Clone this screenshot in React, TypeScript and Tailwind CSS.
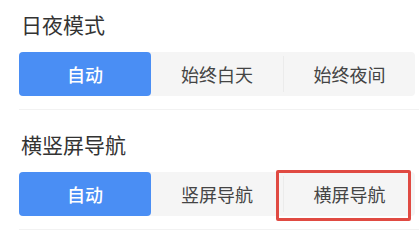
import React from "react";

const sections = [
  { title: "日夜模式", options: ["自动", "始终白天", "始终夜间"], marked: false },
  { title: "横竖屏导航", options: ["自动", "竖屏导航", "横屏导航"], marked: true },
];

export default function App() {
  return (
    <div
      className="w-[419px] h-[241px] bg-white overflow-hidden"
      style={{ fontFamily: '"Noto Sans CJK SC", "Noto Sans", sans-serif' }}
    >
      {sections.map((s) => (
        <div key={s.title} className="h-[120px] pl-[19px] pt-[10px]">
          <div className="h-[28px] leading-[28px] text-[21px] text-[#333] pl-[2px]">{s.title}</div>
          <div className="mt-[14px] flex w-[396px] h-[44px] bg-[#f5f5f5] rounded-[4px]">
            {s.options.map((o, i) => (
              <div key={o} className="relative flex-1 flex items-center">
                {i === 2 && <div className="w-px h-[36px] bg-[#ebebeb]" />}
                <div
                  className={
                    i === 0
                      ? "flex-1 h-full flex items-center justify-center rounded-[4px] bg-[#4a8ef4] text-white text-[18px] font-medium"
                      : "flex-1 h-full flex items-center justify-center text-[18px] text-[#444]"
                  }
                >
                  {o}
                </div>
                {s.marked && i === 2 && (
                  <div className="absolute left-[-7px] right-[4px] top-[-2px] bottom-[-5px] border-[3px] border-[#e04a42] rounded-[2px]" />
                )}
              </div>
            ))}
          </div>
          <div className="mt-[13px] h-px bg-[#f2f2f2]" />
        </div>
      ))}
    </div>
  );
}
